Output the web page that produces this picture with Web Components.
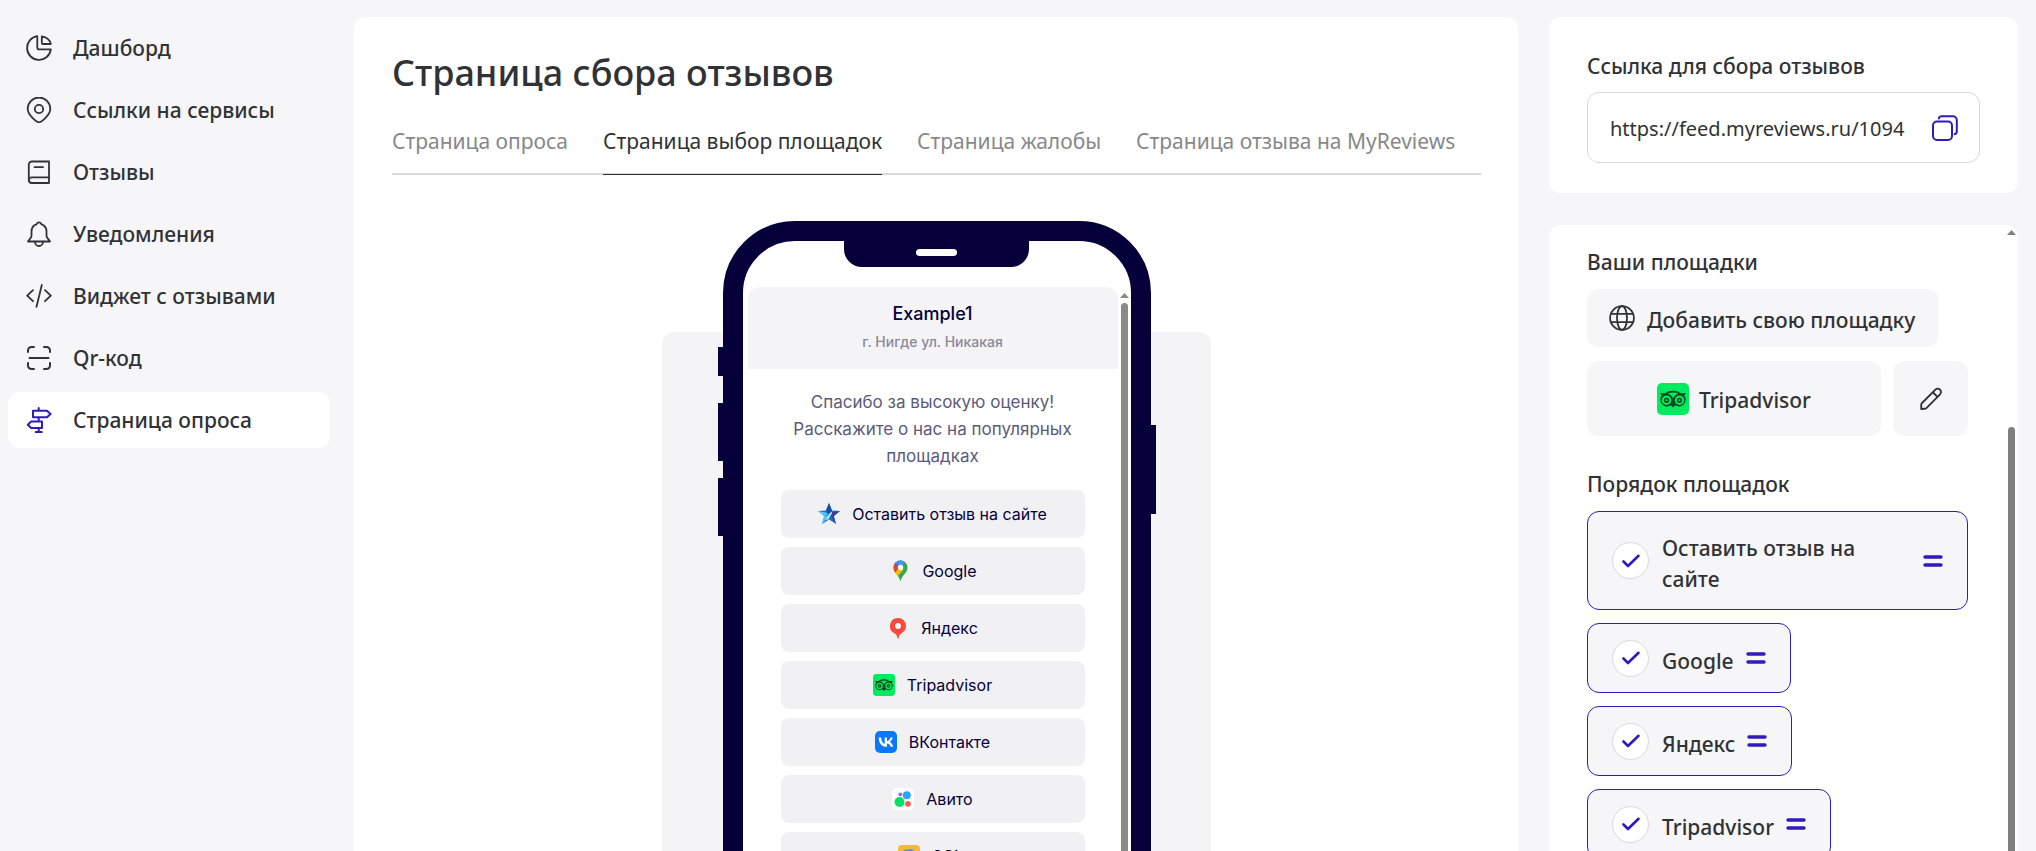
<!DOCTYPE html>
<html lang="ru">
<head>
<meta charset="utf-8">
<meta name="viewport" content="width=device-width, initial-scale=1">
<title>Страница сбора отзывов</title>
<style>
  :root {
    --page-bg: #f6f6f9;
    --card-bg: #fff;
    --soft-bg: #f6f6f8;
    --fg: #313236;
    --muted: #88888a;
    --line: #d9d9d9;
    --accent: #2f1bbb;
    --phone: #05003a;
  }

  body {
    margin: 0;
    background: var(--page-bg);
    color: var(--fg);
    font: 500 21px/30px "Noto Sans", "Open Sans", sans-serif;
  }
</style>
</head>
<body>
<app-shell>
  <nav slot="nav" aria-label="Меню">
    <side-link icon="pie">Дашборд</side-link>
    <side-link icon="pin">Ссылки на сервисы</side-link>
    <side-link icon="book">Отзывы</side-link>
    <side-link icon="bell">Уведомления</side-link>
    <side-link icon="code">Виджет с отзывами</side-link>
    <side-link icon="scan">Qr-код</side-link>
    <side-link icon="signpost" active>Страница опроса</side-link>
  </nav>

  <survey-card slot="main">
    <span slot="title">Страница сбора отзывов</span>
    <tab-link slot="tabs">Страница опроса</tab-link>
    <tab-link slot="tabs" active>Страница выбор площадок</tab-link>
    <tab-link slot="tabs">Страница жалобы</tab-link>
    <tab-link slot="tabs">Страница отзыва на MyReviews</tab-link>
    <phone-preview>
      <span slot="name">Example1</span>
      <span slot="address">г. Нигде ул. Никакая</span>
      <span slot="message">Спасибо за высокую оценку! Расскажите о нас на популярных площадках</span>
      <platform-button icon="star">Оставить отзыв на сайте</platform-button>
      <platform-button icon="google">Google</platform-button>
      <platform-button icon="yandex">Яндекс</platform-button>
      <platform-button icon="tripadvisor">Tripadvisor</platform-button>
      <platform-button icon="vk">ВКонтакте</platform-button>
      <platform-button icon="avito">Авито</platform-button>
      <platform-button icon="gis">2Gis</platform-button>
    </phone-preview>
  </survey-card>

  <copy-field slot="aside" value="https://feed.myreviews.ru/1094">Ссылка для сбора отзывов</copy-field>

  <platform-settings slot="aside">
    <order-item slot="order">Оставить отзыв на сайте</order-item>
    <order-item slot="order">Google</order-item>
    <order-item slot="order">Яндекс</order-item>
    <order-item slot="order">Tripadvisor</order-item>
  </platform-settings>
</app-shell>

<script>
const line = (body, width = 1.8) =>
  `<g fill="none" stroke="currentColor" stroke-width="${width}" stroke-linecap="round" stroke-linejoin="round">${body}</g>`;

// name: [viewBox size, markup]
const icons = {
  pie: [26, line(`<path d="M11.3 1.2A11.9 11.9 0 1 0 24.8 14.4H13.3a2 2 0 0 1-2-2Z"/><path d="M15.8 1.4c4.4.7 8 3.6 9 7.6h-8a1 1 0 0 1-1-1Z"/>`)],
  pin: [26, line(`<path d="M13 25.3C11.3 25.3 1.7 18.5 1.7 11.8a11.3 11.3 0 0 1 22.6 0C24.3 18.5 14.7 25.3 13 25.3Z"/><circle cx="13" cy="12" r="4.2"/>`)],
  book: [26, line(`<path d="M23 2.5H6A3.2 3.2 0 0 0 2.8 5.7V21a3 3 0 0 0 3 3H23Z"/><path d="M23 18.3H5.8a2.900 2.900 0 0 0-3 2.800M8.500 8.200h8.500"/>`)],
  bell: [26, line(`<path d="M13 1.4c1.2 0 1.900.7 2.200 1.700 3.500 1.200 5.300 4 5.300 7.400V15c0 2.200 2.800 3.400 3.500 5.500H2c.7-2.100 3.500-3.300 3.500-5.500v-4.500c0-3.400 1.800-6.200 5.300-7.400.3-1 1-1.700 2.200-1.700Z"/><path d="M9 20.7a4 4.300 0 0 0 8 0"/>`)],
  code: [26, line(`<path d="M7 7.2 1.2 12.7 7 18.2M19 7.2l5.8 5.5-5.8 5.500M15.8 2 10.5 23.8"/>`)],
  scan: [26, line(`<path d="M2 7V5.500A3.500 3.500 0 0 1 5.500 2H8M18 2h2.500A3.500 3.500 0 0 1 24 5.500V7M24 18v2.500a3.500 3.500 0 0 1-3.500 3.500H18M8 24H5.500A3.500 3.500 0 0 1 2 20.500V18M3.500 13h19"/>`, 2)],
  signpost: [26, line(`<path d="M12.7 1v2.800M7 3.800h14l3.600 3.200-3.600 3.200H7ZM12.700 10.200v4.300M16 14.500H5.200L1.800 17.700l3.400 3.200H16ZM12.700 20.900V25M9.800 25.100h6"/>`, 2)],
  globe: [26, line(`<circle cx="13" cy="13" r="11.900"/><ellipse cx="13" cy="13" rx="5" ry="11.900"/><path d="M2.200 8.800h21.600M2.200 17.200h21.600"/>`)],
  pencil: [26, line(`<path d="M2.400 23.800v-4.300a3 3 0 0 1 .9-2.200L17.800 2.900a3.500 3.500 0 0 1 5 5L8.300 22.600a3.500 3.500 0 0 1-2.400 1ZM15 5.700l5 5"/>`, 2)],
  copy: [26, line(`<rect x="1" y="6.500" width="19" height="18.500" rx="4"/><path d="M6.800 3.500c.4-1.600 1.500-2.200 3-2.200h11a4 4 0 0 1 4 4v11c0 1.500-.6 2.600-2.200 3"/>`, 2)],
  handle: [20, `<path stroke="currentColor" stroke-width="3.400" stroke-linecap="round" d="M2 6h16M2 14h16"/>`],
  star: [22, `
    <path fill="#1f6fd0" d="m11 0 3 7.500 8 .5-6.200 5L18 21l-7-4.500L4 21l2.200-8L0 8l8-.5Z"/>
    <path fill="#1650ad" d="m11 0 3 7.500L11 12 8 7.500Z"/>
    <path fill="#4ccdf5" d="M4 21 15.500 8.500 6.200 13ZM0 8l8 1.500 3 2.500-4.800 1Z"/>
    <path fill="#3b3f8f" d="m22 8-6.200 5L18 21l-5-8 1-4Z"/>
    <path fill="#dff4fd" d="m8 17 5-8 1 1-4 6.500Z"/>`],
  google: [22, `
    <clipPath id="g"><path d="M12.500.5a7 7 0 0 1 7 7.200c0 5.300-5.400 7-7 13.800-1.600-6.800-7-8.500-7-13.800a7 7 0 0 1 7-7.200Z"/></clipPath>
    <g clip-path="url(#g)">
      <path fill="#34a853" d="M5 0h16v22H5Z"/>
      <path fill="#fbbc04" d="M5 10.500 9.500 6l6 3.500L8 18H5Z"/>
      <path fill="#ea4335" d="M5 2h3.500l4 5L6.500 13 4 9Z"/>
      <path fill="#1a73e8" d="M7.500 3 10 0h5l-5.500 8Z"/>
      <path fill="#4f93ee" d="m12.500 7.500 5-6L14 0l-3 1-3.500 2Z"/>
    </g>
    <circle cx="12.500" cy="7.500" r="2.700" fill="#fff"/>`],
  yandex: [22, `<path fill="#f8493a" d="M11 1a8 8 0 0 1 8 8c0 3.500-2 6-4.500 7.200-1.700.9-2.700 3-3 5.300h-1c-.3-2.300-1.300-4.400-3-5.300A8 8 0 0 1 11 1Z"/><circle cx="11" cy="9" r="2.900" fill="#fff"/>`],
  tripadvisor: [32, `
    <rect width="32" height="32" rx="5" fill="#00eb5e"/>
    <path fill="#00481f" d="M3 10.200h5.300C10.500 8.500 13 7.700 16 7.700s5.500.8 7.700 2.500H29l-1.800 2.400a6.700 6.700 0 0 1-9 9.700L16 24.600l-2.200-2.300a6.700 6.700 0 0 1-9-9.700Z"/>
    <path fill="#00eb5e" d="M10.500 10.800c3.500-1.600 7.500-1.600 11 0-3 .4-5.200 2.700-5.500 5.700-.3-3-2.500-5.300-5.500-5.700Z"/>
    <circle cx="9.500" cy="17.300" r="4.700" fill="#00eb5e"/><circle cx="22.500" cy="17.300" r="4.700" fill="#00eb5e"/>
    <circle cx="9.500" cy="17.300" r="2.600" fill="#00481f"/><circle cx="22.500" cy="17.300" r="2.600" fill="#00481f"/>
    <circle cx="9.500" cy="17.300" r="1" fill="#00eb5e"/><circle cx="22.500" cy="17.300" r="1" fill="#00eb5e"/>`],
  vk: [22, `
    <rect width="22" height="22" rx="5" fill="#0a78fb"/>
    <path fill="#fff" d="M11.800 15.800C6.700 15.800 3.800 12.300 3.700 6.500h2.500c.1 4.200 2 6 3.500 6.400V6.500h2.300v3.700c1.500-.2 3-1.900 3.500-3.700h2.300c-.4 2.200-2 3.900-3.200 4.500 1.200.6 3 2 3.700 4.800h-2.600c-.5-1.700-1.900-3-3.700-3.200v3.200Z"/>`],
  avito: [22, `
    <rect width="22" height="22" rx="5" fill="#fff"/>
    <circle cx="7.500" cy="14" r="5" fill="#04e061"/><circle cx="14.800" cy="7.200" r="4" fill="#2aa5f2"/>
    <circle cx="16" cy="15.800" r="2.900" fill="#ff5a50"/><circle cx="8.300" cy="6.300" r="1.900" fill="#8d6fcf"/>`],
  gis: [22, `
    <rect width="22" height="22" rx="4" fill="#f6b93b"/>
    <path fill="#3aa757" d="M0 8 9 4v18H4a4 4 0 0 1-4-4Z"/><circle cx="12" cy="10" r="6" fill="#5b8def"/>`]
};

class AppIcon extends HTMLElement {
  connectedCallback() {
    const [box, body] = icons[this.getAttribute('name')];
    this.attachShadow({ mode: 'open' }).innerHTML = `
      <style>
        :host {
          display: block;
          flex: none;
          width: var(--icon-size, 26px);
          height: var(--icon-size, 26px);
        }

        svg {
          display: block;
          width: 100%;
          height: 100%;
        }
      </style>
      <svg viewBox="0 0 ${box} ${box}" aria-hidden="true">${body}</svg>
    `;
  }
}

customElements.define('app-icon', AppIcon);

const shellTemplate = document.createElement('template');
shellTemplate.innerHTML = `
  <style>
    :host {
      display: grid;
      grid-template-columns: 322px minmax(0, 1fr) 469px;
      gap: 24px;
      height: 100vh;
      box-sizing: border-box;
      padding: 0 18px 0 8px;
      overflow: hidden;
    }

    .nav {
      padding-top: 20px;
    }

    ::slotted(nav) {
      display: flex;
      flex-direction: column;
      gap: 6px;
    }

    .main,
    .aside {
      display: flex;
      flex-direction: column;
      min-height: 0;
      padding-top: 17px;
    }

    .main {
      padding-right: 7px;
    }

    .aside {
      gap: 32px;
    }
  </style>

  <div class="nav"><slot name="nav"></slot></div>
  <main class="main"><slot name="main"></slot></main>
  <aside class="aside"><slot name="aside"></slot></aside>
`;

class AppShell extends HTMLElement {
  constructor() {
    super();
    this.attachShadow({ mode: 'open' });
    this.shadowRoot.appendChild(shellTemplate.content.cloneNode(true));
  }
}

customElements.define('app-shell', AppShell);

class SideLink extends HTMLElement {
  connectedCallback() {
    this.attachShadow({ mode: 'open' }).innerHTML = `
      <style>
        :host {
          display: block;
        }

        a {
          display: flex;
          align-items: center;
          gap: 21px;
          height: 56px;
          padding: 0 18px;
          border-radius: 12px;
          color: inherit;
          text-decoration: none;
        }

        :host([active]) a {
          background: var(--card-bg);
        }

        :host([active]) app-icon {
          color: var(--accent);
        }
      </style>
      <a href="#"><app-icon name="${this.getAttribute('icon')}"></app-icon><slot></slot></a>
    `;
  }
}

customElements.define('side-link', SideLink);

class TabLink extends HTMLElement {
  connectedCallback() {
    this.attachShadow({ mode: 'open' }).innerHTML = `
      <style>
        :host {
          display: block;
          margin-bottom: -2px;
        }

        a {
          display: block;
          padding-bottom: 18px;
          border-bottom: 1px solid transparent;
          color: var(--muted);
          font-weight: 400;
          text-decoration: none;
          white-space: nowrap;
        }

        :host([active]) a {
          border-color: var(--fg);
          color: var(--fg);
        }
      </style>
      <a href="#"><slot></slot></a>
    `;
  }
}

customElements.define('tab-link', TabLink);

const surveyTemplate = document.createElement('template');
surveyTemplate.innerHTML = `
  <style>
    :host {
      display: block;
      flex: 1;
      min-height: 0;
      overflow: hidden;
      padding: 32px 37px 0 38px;
      border-radius: 12px 12px 0 0;
      background: var(--card-bg);
    }

    h1 {
      margin: 0 0 29px;
      font-size: 36px;
      line-height: 48px;
      font-weight: 500;
    }

    .tabs {
      display: flex;
      gap: 35px;
      border-bottom: 2px solid var(--line);
    }

    .stage {
      display: flex;
      justify-content: center;
      width: 549px;
      margin: 157px auto 0;
      border-radius: 12px;
      background: #f4f4f6;
    }
  </style>

  <h1><slot name="title"></slot></h1>
  <nav class="tabs"><slot name="tabs"></slot></nav>
  <div class="stage"><slot></slot></div>
`;

class SurveyCard extends HTMLElement {
  constructor() {
    super();
    this.attachShadow({ mode: 'open' });
    this.shadowRoot.appendChild(surveyTemplate.content.cloneNode(true));
  }
}

customElements.define('survey-card', SurveyCard);

const railTemplate = document.createElement('template');
railTemplate.innerHTML = `
  <style>
    :host {
      display: flex;
      flex-direction: column;
      align-items: center;
      flex: none;
      width: 9px;
      color: #808080;
    }

    svg {
      display: block;
      flex: none;
      width: 9px;
      height: 5px;
    }

    .thumb {
      flex: 1;
      width: 7px;
      margin-top: var(--thumb-start, 5px);
      border-radius: 4px 4px 0 0;
      background: currentColor;
    }
  </style>

  <svg viewBox="0 0 9 5" aria-hidden="true"><path fill="currentColor" d="M4.500 0 9 5H0Z"/></svg>
  <div class="thumb"></div>
`;

class ScrollRail extends HTMLElement {
  constructor() {
    super();
    this.attachShadow({ mode: 'open' });
    this.shadowRoot.appendChild(railTemplate.content.cloneNode(true));
  }
}

customElements.define('scroll-rail', ScrollRail);

const phoneTemplate = document.createElement('template');
phoneTemplate.innerHTML = `
  <style>
    :host {
      display: block;
      position: relative;
      box-sizing: border-box;
      width: 428px;
      margin-top: -111px;
      padding-bottom: 60px;
      border: 20px solid var(--phone);
      border-radius: 72px;
      background: #fff;
      font-family: Inter, "Noto Sans", sans-serif;
      font-weight: 400;
    }

    /* hardware keys stick out of the frame */
    .key {
      position: absolute;
      left: -25px;
      width: 5px;
      background: var(--phone);
    }

    .mute { top: 106px; height: 29px; }
    .up { top: 162px; height: 58px; }
    .down { top: 237px; height: 58px; }
    .power { top: 184px; left: auto; right: -25px; height: 89px; }

    .notch {
      display: flex;
      justify-content: center;
      align-items: flex-start;
      width: 185px;
      height: 26px;
      margin: 0 auto 20px;
      border-radius: 0 0 18px 18px;
      background: var(--phone);
    }

    .speaker {
      width: 41px;
      height: 7px;
      margin-top: 8px;
      border-radius: 4px;
      background: #fff;
    }

    .screen {
      display: flex;
      gap: 2px;
      padding: 0 2px 0 5px;
    }

    .page {
      flex: 1;
      min-width: 0;
      text-align: center;
    }

    header {
      padding: 13px 0;
      border-radius: 12px 12px 0 0;
      background: #f4f4f6;
    }

    .name {
      color: var(--phone);
      font-size: 18px;
      line-height: 28px;
      font-weight: 500;
    }

    .address {
      color: #8a8899;
      font-size: 14px;
      line-height: 28px;
      font-weight: 500;
    }

    .message {
      margin: 20px 33px;
      color: #5b5a7b;
      font-size: 17px;
      line-height: 27px;
    }

    .list {
      display: flex;
      flex-direction: column;
      gap: 9px;
      padding: 0 33px;
    }

    scroll-rail {
      padding-top: 6px;
      color: #888b87;
    }
  </style>

  <i class="key mute"></i>
  <i class="key up"></i>
  <i class="key down"></i>
  <i class="key power"></i>
  <div class="notch"><div class="speaker"></div></div>
  <div class="screen">
    <div class="page">
      <header>
        <div class="name"><slot name="name"></slot></div>
        <div class="address"><slot name="address"></slot></div>
      </header>
      <p class="message"><slot name="message"></slot></p>
      <div class="list"><slot></slot></div>
    </div>
    <scroll-rail></scroll-rail>
  </div>
`;

class PhonePreview extends HTMLElement {
  constructor() {
    super();
    this.attachShadow({ mode: 'open' });
    this.shadowRoot.appendChild(phoneTemplate.content.cloneNode(true));
  }
}

customElements.define('phone-preview', PhonePreview);

class PlatformButton extends HTMLElement {
  connectedCallback() {
    this.attachShadow({ mode: 'open' }).innerHTML = `
      <style>
        :host {
          display: block;
          --icon-size: 22px;
        }

        a {
          display: flex;
          justify-content: center;
          align-items: center;
          gap: 12px;
          height: 48px;
          border-radius: 8px;
          background: #f1f1f3;
          color: var(--phone);
          font-size: 16px;
          line-height: 24px;
          text-decoration: none;
        }
      </style>
      <a href="#"><app-icon name="${this.getAttribute('icon')}"></app-icon><slot></slot></a>
    `;
  }
}

customElements.define('platform-button', PlatformButton);

const copyTemplate = document.createElement('template');
copyTemplate.innerHTML = `
  <style>
    :host {
      display: block;
      padding: 34px 38px 30px;
      border-radius: 12px;
      background: var(--card-bg);
    }

    label {
      display: block;
      margin-bottom: 11px;
    }

    .field {
      display: flex;
      align-items: center;
      gap: 22px;
      height: 69px;
      padding: 0 21px 0 22px;
      border: 1px solid var(--line);
      border-radius: 12px;
    }

    input {
      flex: 1;
      min-width: 0;
      padding: 3px 0 0;
      border: 0;
      outline: none;
      background: none;
      color: inherit;
      font: inherit;
      font-size: 20px;
      font-weight: 400;
    }

    button {
      padding: 0;
      border: 0;
      background: none;
      color: var(--accent);
      cursor: pointer;
    }
  </style>

  <label for="link"><slot></slot></label>
  <div class="field">
    <input id="link" type="text" readonly>
    <button type="button" aria-label="Скопировать"><app-icon name="copy"></app-icon></button>
  </div>
`;

class CopyField extends HTMLElement {
  constructor() {
    super();
    this.attachShadow({ mode: 'open' });
    this.shadowRoot.appendChild(copyTemplate.content.cloneNode(true));

    this.input = this.shadowRoot.querySelector('input');
    this.button = this.shadowRoot.querySelector('button');
  }

  connectedCallback() {
    this.input.value = this.getAttribute('value');
    this.button.addEventListener('click', () => navigator.clipboard.writeText(this.input.value));
  }
}

customElements.define('copy-field', CopyField);

const settingsTemplate = document.createElement('template');
settingsTemplate.innerHTML = `
  <style>
    :host {
      display: flex;
      flex: 1;
      min-height: 0;
      overflow: hidden;
      border-radius: 12px 12px 0 0;
      background: var(--card-bg);
    }

    .content {
      flex: 1;
      min-width: 0;
      padding: 22px 39px 0 38px;
    }

    h2 {
      margin: 0 0 12px;
      font: inherit;
    }

    button {
      display: flex;
      align-items: center;
      justify-content: center;
      gap: 10px;
      padding: 0;
      border: 0;
      border-radius: 12px;
      background: var(--soft-bg);
      color: inherit;
      font: inherit;
      cursor: pointer;
    }

    button span {
      padding-top: 3px;
    }

    .add {
      gap: 12px;
      height: 58px;
      padding: 0 24px 0 22px;
    }

    .row {
      display: flex;
      gap: 12px;
      margin: 14px 0 33px;
    }

    .platform {
      flex: 1;
      height: 75px;
      --icon-size: 32px;
    }

    .edit {
      width: 75px;
      --icon-size: 24px;
    }

    .order {
      display: flex;
      flex-direction: column;
      align-items: flex-start;
      gap: 13px;
    }

    scroll-rail {
      margin-right: 2px;
      padding-top: 5px;
      --thumb-start: 192px;
    }
  </style>

  <div class="content">
    <h2>Ваши площадки</h2>
    <button type="button" class="add"><app-icon name="globe"></app-icon><span>Добавить свою площадку</span></button>
    <div class="row">
      <button type="button" class="platform"><app-icon name="tripadvisor"></app-icon><span>Tripadvisor</span></button>
      <button type="button" class="edit" aria-label="Редактировать"><app-icon name="pencil"></app-icon></button>
    </div>
    <h2>Порядок площадок</h2>
    <div class="order"><slot name="order"></slot></div>
  </div>
  <scroll-rail></scroll-rail>
`;

class PlatformSettings extends HTMLElement {
  constructor() {
    super();
    this.attachShadow({ mode: 'open' });
    this.shadowRoot.appendChild(settingsTemplate.content.cloneNode(true));
  }
}

customElements.define('platform-settings', PlatformSettings);

const orderTemplate = document.createElement('template');
orderTemplate.innerHTML = `
  <style>
    :host {
      display: flex;
      align-items: center;
      gap: 12px;
      box-sizing: border-box;
      max-width: 100%;
      padding: 15px 24px;
      border: 1px solid var(--accent);
      border-radius: 12px;
      background: var(--soft-bg);
      --icon-size: 20px;
    }

    :host(:first-of-type) {
      padding: 14px 24px;
    }

    label {
      display: flex;
      align-items: center;
      gap: 13px;
      min-width: 0;
    }

    .check {
      display: grid;
      flex: none;
    }

    .check > * {
      grid-area: 1 / 1;
      place-self: center;
    }

    input {
      appearance: none;
      box-sizing: border-box;
      width: 37px;
      height: 37px;
      margin: 0;
      border: 1px solid var(--line);
      border-radius: 50%;
      background: #fff;
    }

    .check svg {
      width: 18px;
      height: 14px;
      visibility: hidden;
      pointer-events: none;
    }

    input:checked + svg {
      visibility: visible;
    }

    .text {
      padding-top: 7px;
      line-height: 31px;
    }

    app-icon {
      color: var(--accent);
    }
  </style>

  <label>
    <span class="check">
      <input type="checkbox" checked>
      <svg viewBox="0 0 18 14" aria-hidden="true"><path fill="none" stroke="#2f1bbb" stroke-width="2.600" stroke-linecap="round" stroke-linejoin="round" d="m1.500 7.500 4.500 4.500L16.500 1.800"/></svg>
    </span>
    <span class="text"><slot></slot></span>
  </label>
  <app-icon name="handle"></app-icon>
`;

class OrderItem extends HTMLElement {
  constructor() {
    super();
    this.attachShadow({ mode: 'open' });
    this.shadowRoot.appendChild(orderTemplate.content.cloneNode(true));
  }
}

customElements.define('order-item', OrderItem);
</script>
</body>
</html>
